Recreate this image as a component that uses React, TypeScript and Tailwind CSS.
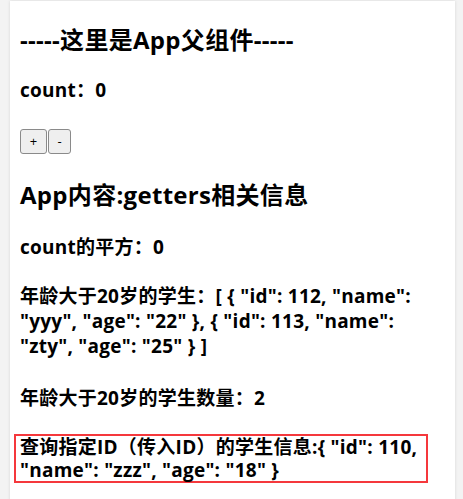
import React from "react";

const font = {
  fontFamily: '"Open Sans", "Noto Sans CJK SC", "Noto Sans", sans-serif',
};

export default function App() {
  return (
    <div className="min-h-[499px] bg-[#f3f3f3] pt-px pl-[10px] pr-[8px]" style={font}>
      <div className="min-h-[520px] bg-white shadow-[0_0_3px_rgba(0,0,0,0.12)] pl-[10px] pr-[31px] pt-[23px] text-black">
        <h2 className="text-[24px] font-bold leading-[32px] tracking-[0.3px]">-----这里是App父组件-----</h2>
        <h3 className="mt-[22px] text-[19px] font-bold leading-[25px] tracking-[0.25px]">count：0</h3>
        <div className="mt-[26px] flex gap-px">
          <button className="h-[25px] w-[27px] rounded-[3px] border border-[#8a8a8a] bg-[#efefef] text-[13px] leading-none">+</button>
          <button className="h-[25px] w-[23px] rounded-[3px] border border-[#8a8a8a] bg-[#efefef] text-[13px] leading-none">-</button>
        </div>
        <h2 className="mt-[25px] text-[24px] font-bold leading-[32px] tracking-[0.3px]">App内容:getters相关信息</h2>
        <h3 className="mt-[24px] text-[19px] font-bold leading-[25px] tracking-[0.25px]">count的平方：0</h3>
        <h3 className="mt-[24px] text-[19px] font-bold leading-[25px] tracking-[0.25px]">
          年龄大于20岁的学生：[ {"{"} "id": 112, "name": "yyy", "age": "22" {"}"}, {"{"} "id": 113, "name": "zty", "age": "25" {"}"} ]
        </h3>
        <h3 className="mt-[27px] text-[19px] font-bold leading-[25px] tracking-[0.25px]">年龄大于20岁的学生数量：2</h3>
        <div className="mt-[23px] -ml-[6px] -mr-[4px] border-2 border-[#f5383c] pl-[4px] pr-[2px]">
          <h3 className="text-[19px] font-bold leading-[22.5px] tracking-[0.25px]">
            查询指定ID（传入ID）的学生信息:{"{"} "id": 110, "name": "zzz", "age": "18" {"}"}
          </h3>
        </div>
      </div>
    </div>
  );
}
